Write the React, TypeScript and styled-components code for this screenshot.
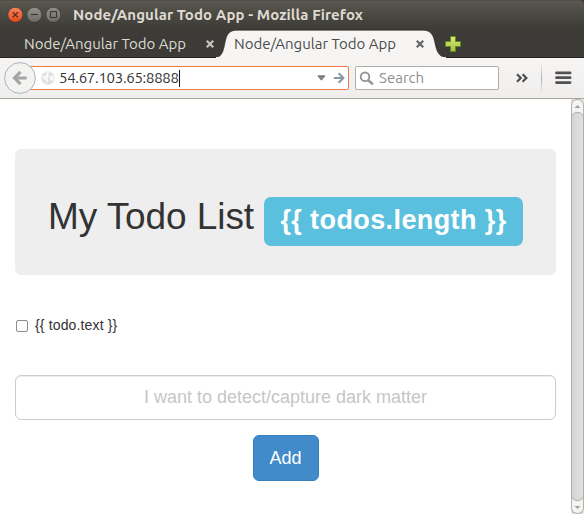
import React from "react";
import styled, { createGlobalStyle } from "styled-components";

const Global = createGlobalStyle`
  *, *::before, *::after { box-sizing: border-box; }
  html, body { margin: 0; padding: 0; overflow: hidden; background: #fff; }
  svg { display: block; flex: none; }
`;

const uiFont = `"Ubuntu", "Noto Sans", sans-serif`;
const pageFont = `"Liberation Sans", Arial, sans-serif`;

const Window = styled.div`
  width: 584px;
  height: 514px;
  display: flex;
  flex-direction: column;
  overflow: hidden;
  background: #3c3b37;
  font-family: ${uiFont};
`;

const TitleBar = styled.header`
  height: 28px;
  display: flex;
  align-items: center;
  padding-left: 7px;
  background: linear-gradient(#45433d 0, #5c5a52 1px, #57554d 3px, #3e3d38 27px);
  border-radius: 0 5px 0 0;
`;

const WindowButtons = styled.div`
  display: flex;
  gap: 3px;
  padding-top: 1px;
`;

const WindowTitle = styled.h1`
  margin: 0 0 0 12px;
  font-size: 15px;
  font-weight: 700;
  line-height: 28px;
  letter-spacing: 0.08px;
  color: #dfdbd2;
  white-space: nowrap;
  padding-top: 1px;
`;

const TabStrip = styled.nav`
  height: 30px;
  display: flex;
  background: #3c3b37;
  border-bottom: 1px solid #24231f;
`;

const Tab = styled.div<{ $active?: boolean }>`
  position: relative;
  width: ${(p) => (p.$active ? 220 : 216)}px;
  margin-left: ${(p) => (p.$active ? 0 : 4)}px;
  height: 29px;
  display: flex;
  align-items: center;
  padding: 2px 0 0 ${(p) => (p.$active ? 14 : 20)}px;
  color: ${(p) => (p.$active ? "#4c4c4c" : "#dfdbd2")};
`;

const TabShape = styled.svg`
  position: absolute;
  left: -7px;
  top: 1px;
`;

const TabLabel = styled.span`
  position: relative;
  width: 181px;
  font-size: 15px;
  line-height: 26px;
  letter-spacing: -0.02px;
  white-space: nowrap;
`;

const CloseMark = styled.svg`
  position: relative;
`;

const NavBar = styled.div`
  height: 41px;
  display: flex;
  align-items: center;
  padding: 0 0 0 4px;
  background: linear-gradient(#f6f5f4, #efeeed);
  border-bottom: 1px solid #aaa59d;
`;

const BackButton = styled.div`
  position: relative;
  z-index: 1;
  width: 32px;
  height: 32px;
`;

const Field = styled.div<{ $focused?: boolean }>`
  height: 24px;
  width: ${(p) => (p.$focused ? 329 : 144)}px;
  margin-left: ${(p) => (p.$focused ? -16 : 6)}px;
  padding-left: ${(p) => (p.$focused ? 20 : 3)}px;
  display: flex;
  align-items: center;
  background: #fff;
  border: 1px solid ${(p) => (p.$focused ? "#f07746" : "#b2ada6")};
  border-radius: 2px;
  font-size: 15px;
`;

const Address = styled.span`
  width: 258px;
  margin-left: 4px;
  display: flex;
  align-items: center;
  color: #333;
  line-height: 22px;
  letter-spacing: -0.3px;
`;

const Caret = styled.i`
  width: 1px;
  height: 17px;
  background: #111;
`;

const SearchHint = styled.span`
  margin-left: 5px;
  color: #8e8e8e;
  line-height: 22px;
  letter-spacing: 0.02px;
`;

const Separator = styled.i`
  width: 1px;
  height: 32px;
  margin: 0 13px;
  background: linear-gradient(transparent, #a9b1ba 50%, transparent);
`;

const Viewport = styled.div`
  flex: 1;
  min-height: 0;
  display: flex;
  background: #fff;
`;

const Page = styled.main`
  width: 571px;
  padding: 50px 15px 0;
  font-family: ${pageFont};
  color: #333;
`;

const Jumbotron = styled.section`
  height: 126px;
  padding: 48px 33px 0;
  display: flex;
  align-items: flex-start;
  border-radius: 6px;
  background: #eee;
`;

const Heading = styled.h2`
  margin: 0;
  width: 216px;
  font-size: 37px;
  font-weight: 400;
  line-height: 40px;
  letter-spacing: -0.08px;
  white-space: nowrap;
`;

const Count = styled.span`
  width: 259px;
  height: 49px;
  text-align: center;
  font-size: 27px;
  font-weight: 700;
  line-height: 47px;
  letter-spacing: 0.4px;
  color: #fff;
  background: #5bc0de;
  border-radius: 7px;
  white-space: nowrap;
`;

const TodoRow = styled.label`
  height: 20px;
  margin-top: 40px;
  display: flex;
  align-items: center;
  font-size: 14px;
  letter-spacing: 0.15px;
`;

const Checkbox = styled.span`
  width: 12px;
  height: 12px;
  margin: 2px 7px 0 1px;
  border: 1px solid #8e8b86;
  border-radius: 2px;
  background: #fff;
`;

const TodoForm = styled.form`
  margin-top: 40px;
  display: flex;
  flex-direction: column;
  align-items: center;
  gap: 15px;
`;

const TodoInput = styled.input`
  width: 100%;
  height: 45px;
  padding: 0 16px;
  border: 1px solid #ccc;
  border-radius: 6px;
  box-shadow: inset 0 1px 1px rgba(0, 0, 0, 0.075);
  font: 18px ${pageFont};
  text-align: center;
  &::placeholder { color: #c6c6c6; opacity: 1; }
`;

const AddButton = styled.button`
  width: 66px;
  height: 46px;
  padding: 0;
  border: 1px solid #357ebd;
  border-radius: 6px;
  background: #428bca;
  color: #fff;
  font: 18px ${pageFont};
`;

const Scrollbar = styled.div`
  width: 13px;
  display: flex;
  flex-direction: column;
  background: #e6e4e1;
`;

const ScrollEnd = styled.div<{ $bottom?: boolean }>`
  height: 13px;
  display: flex;
  align-items: center;
  justify-content: center;
  background: #f4f3f2;
  border: 1px solid #b5b2ac;
  border-radius: ${(p) => (p.$bottom ? "0 0 6px 6px" : "6px 6px 0 0")};
  ${(p) => (p.$bottom ? "border-top: 0;" : "border-bottom: 0;")}
`;

const ThumbTrack = styled.div`
  flex: 1;
  display: flex;
  background: linear-gradient(90deg, #b5b2ac 1px, #f4f3f2 1px, #f4f3f2 12px, #b5b2ac 12px);
`;

const ScrollThumb = styled.div`
  flex: 1;
  border: 1px solid #b0ada7;
  border-radius: 6px;
  background: linear-gradient(90deg, #d7d5d3, #e1e0de);
`;

function WindowButton({ kind }: { kind: "close" | "min" | "max" }) {
  const close = kind === "close";
  const ink = close ? "#62291a" : "#3c3a35";
  return (
    <svg width="16" height="16" viewBox="0 0 16 16" fill="none">
      <defs>
        <linearGradient id={`wb-${kind}`} x1="0" y1="0" x2="0" y2="1">
          <stop offset="0" stopColor={close ? "#f58661" : "#94928b"} />
          <stop offset="1" stopColor={close ? "#df4b1b" : "#6c6a63"} />
        </linearGradient>
      </defs>
      <circle cx="8.3" cy="7.8" r="7.5" fill={`url(#wb-${kind})`} stroke="#33312c" strokeWidth=".6" />
      {close && <path d="M5.7 5.2l5.2 5.2M10.9 5.2l-5.2 5.2" stroke={ink} strokeWidth="1.3" />}
      {kind === "min" && <path d="M5 7.5h7" stroke={ink} strokeWidth="1.1" />}
      {kind === "max" && <rect x="5.5" y="4.5" width="6" height="6" stroke={ink} strokeWidth="1.1" />}
    </svg>
  );
}

function TabClose({ color }: { color: string }) {
  return (
    <CloseMark width="10" height="10" viewBox="0 0 10 10">
      <path d="M1.8 1.8l6.4 6.4M8.2 1.8L1.8 8.2" stroke={color} strokeWidth="2.3" />
    </CloseMark>
  );
}

function ScrollArrow({ down }: { down?: boolean }) {
  return (
    <svg width="7" height="5" viewBox="0 0 7 5">
      <path d={down ? "M.5 1h6l-3 3z" : "M.5 4h6l-3-3z"} fill="#a5a29c" />
    </svg>
  );
}

const Shift = styled.div<{ $left: number; $top?: number }>`
  margin-left: ${(p) => p.$left}px;
  margin-top: ${(p) => p.$top ?? 0}px;
`;

export default function App() {
  return (
    <Window>
      <Global />
      <TitleBar>
        <WindowButtons>
          <WindowButton kind="close" />
          <WindowButton kind="min" />
          <WindowButton kind="max" />
        </WindowButtons>
        <WindowTitle>Node/Angular Todo App - Mozilla Firefox</WindowTitle>
      </TitleBar>

      <TabStrip>
        <Tab>
          <TabLabel>Node/Angular Todo App</TabLabel>
          <TabClose color="#c4c1b9" />
        </Tab>
        <Tab $active>
          <TabShape width="236" height="29" viewBox="0 0 236 29">
            <path
              d="M2 28.6C8 28.2 9.6 24 11.2 17.5C13 10 13 1.2 24 1.2H210C220.500 1.2 221 10 222.800 17.500C224.400 24 227 28.2 234 28.6Z"
              fill="#f6f5f4"
              stroke="#24231f"
              strokeWidth=".6"
            />
            <path d="M3 28.6H233" stroke="#f6f5f4" strokeWidth="1.2" />
          </TabShape>
          <TabLabel>Node/Angular Todo App</TabLabel>
          <TabClose color="#666" />
        </Tab>
        <Shift $left={5} $top={8}>
          <svg width="16" height="16" viewBox="0 0 16 16">
            <defs>
              <linearGradient id="plus" x1="0" y1="0" x2="0" y2="1">
                <stop offset="0" stopColor="#dcea7c" />
                <stop offset="1" stopColor="#a5c236" />
              </linearGradient>
            </defs>
            <path
              d="M5.5.5h5v5h5v5h-5v5h-5v-5h-5v-5h5z"
              fill="url(#plus)"
              stroke="#5f8a20"
            />
          </svg>
        </Shift>
      </TabStrip>

      <NavBar>
        <BackButton>
          <svg width="32" height="32" viewBox="0 0 32 32" fill="none">
            <circle cx="16" cy="16" r="15.4" fill="#f3f3f2" stroke="#adb4bb" />
            <path d="M16.5 9.8L10.5 16l6 6.2M11 16h11.7" stroke="#a5a5a5" strokeWidth="3.2" />
          </svg>
        </BackButton>
        <Field $focused>
          <svg width="14" height="14" viewBox="0 0 14 14">
            <circle cx="7" cy="7" r="6.7" fill="#e0e0e0" />
            <path d="M4.500 .8L6 3 4 5 1 5.500 2.500 8 5 9.500 5.500 12.500 7.500 10 6.500 7.500 8 5.500 7 3.500 8.500 1zM9 5l3.500-.5.6 2.500-1.100 3-2-.5L8.500 7z" fill="#f8f8f8" />
          </svg>
          <Address>
            54.67.103.65:8888
            <Caret />
          </Address>
          <svg width="9" height="6" viewBox="0 0 9 6">
            <path d="M.8.8h7.2L4.4 5.2z" fill="#858585" stroke="#666" strokeWidth=".8" />
          </svg>
          <Shift $left={7}>
            <svg width="12" height="12" viewBox="0 0 12 12" fill="none">
              <path d="M.8 6H10M5.6 1.2L10.4 6l-4.8 4.8" stroke="#8996a7" strokeWidth="2.1" />
            </svg>
          </Shift>
        </Field>
        <Field>
          <svg width="15" height="15" viewBox="0 0 15 15" fill="none">
            <circle cx="6" cy="5.8" r="4.3" stroke="#969696" strokeWidth="1.9" />
            <path d="M9.2 9.2l4.7 4.1" stroke="#969696" strokeWidth="2.5" />
          </svg>
          <SearchHint>Search</SearchHint>
        </Field>
        <Shift $left={17}>
          <svg width="12" height="10" viewBox="0 0 12 10" fill="none">
            <path d="M1 1.2L4.8 5 1 8.8M6.6 1.2L10.4 5 6.6 8.8" stroke="#484848" strokeWidth="2.1" />
          </svg>
        </Shift>
        <Separator />
        <svg width="17" height="14" viewBox="0 0 17 14">
          <path d="M1.5 1.9h13.6M1.5 6.7h13.6M1.5 11.6h13.6" stroke="#515151" strokeWidth="2.8" strokeLinecap="round" />
        </svg>
      </NavBar>

      <Viewport>
        <Page>
          <Jumbotron>
            <Heading>My Todo List</Heading>
            <Count>{"{{ todos.length }}"}</Count>
          </Jumbotron>
          <TodoRow>
            <Checkbox />
            {"{{ todo.text }}"}
          </TodoRow>
          <TodoForm>
            <TodoInput placeholder="I want to detect/capture dark matter" />
            <AddButton type="button">Add</AddButton>
          </TodoForm>
        </Page>
        <Scrollbar>
          <ScrollEnd>
            <ScrollArrow />
          </ScrollEnd>
          <ThumbTrack>
            <ScrollThumb />
          </ThumbTrack>
          <ScrollEnd $bottom>
            <ScrollArrow down />
          </ScrollEnd>
        </Scrollbar>
      </Viewport>
    </Window>
  );
}
